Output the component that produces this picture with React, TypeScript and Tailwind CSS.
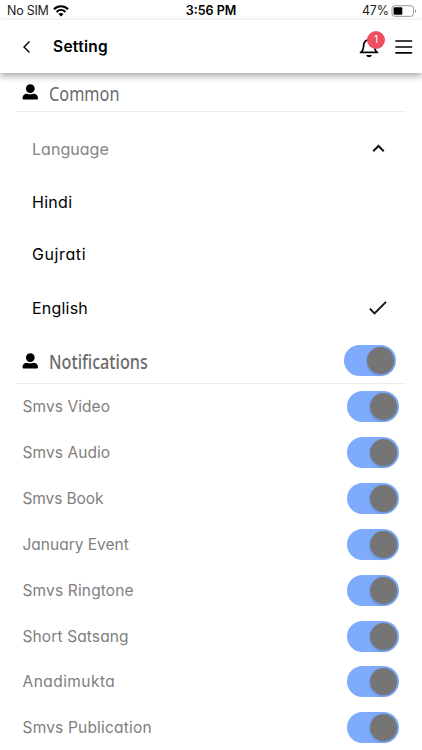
import type { ReactNode } from "react";

const items = [
  { label: "Smvs Video", tracking: "tracking-[0.07px]" },
  { label: "Smvs Audio", tracking: "tracking-[0.07px]" },
  { label: "Smvs Book", tracking: "tracking-[-0.1px]" },
  { label: "January Event", tracking: "tracking-[0px]" },
  { label: "Smvs Ringtone", tracking: "tracking-[0.15px]" },
  { label: "Short Satsang", tracking: "tracking-[0.12px]" },
  { label: "Anadimukta", tracking: "tracking-[0.45px]" },
  { label: "Smvs Publication", tracking: "tracking-[0.19px]" },
];

function Toggle() {
  return (
    <div className="flex h-[31px] w-[52px] shrink-0 items-center justify-end rounded-full bg-[#7eabfc] pr-[2px]">
      <div className="size-[27px] rounded-full bg-[#757575] shadow-[0_1px_3px_rgba(0,0,0,0.2)]" />
    </div>
  );
}

function Person({ className }: { className: string }) {
  return (
    <svg width="16" height="16" viewBox="0 0 16 16" className={`shrink-0 ${className}`}>
      <circle cx="8.300" cy="4.600" r="4.400" />
      <path d="M.5 14.200C.5 11.300 2.400 9.800 5 9.700c1.800.8 4.800.8 6.600 0 2.600.1 4.400 1.600 4.400 4.500 0 .8-.5 1.300-1.300 1.300H1.800c-.8 0-1.300-.5-1.300-1.300Z" />
    </svg>
  );
}

function SectionTitle({ children, className }: { children: ReactNode; className: string }) {
  return (
    <h2 className={`origin-left whitespace-nowrap font-['Noto_Sans',sans-serif] text-[19.5px] leading-6 text-[#6b6b6b] ${className}`}>
      {children}
    </h2>
  );
}

export default function App() {
  return (
    <div className="flex h-[750px] w-full flex-col overflow-hidden bg-white font-['Inter',sans-serif] text-black [font-feature-settings:'cv11']">
      <div className="grid h-5 shrink-0 grid-cols-3 items-center pt-[2px] pr-[5px] pl-[7px] text-[12.5px] leading-4 [font-feature-settings:normal]">
        <div className="flex items-center gap-[4px] text-[#222]">
          <span className="tracking-[-0.25px]">No SIM</span>
          <svg width="16" height="12" viewBox="0 0 16 12" fill="none" stroke="#000" strokeWidth="2.1">
            <path d="M1 4.300C5 .3 11 .3 15 4.300M3.500 6.900c2.600-2.500 6.400-2.500 9 0" />
            <path d="M8 11.500 5.500 9c1.400-1.300 3.600-1.300 5 0Z" fill="#000" stroke="none" />
          </svg>
        </div>
        <span className="-ml-[2px] text-center font-semibold">3:56 PM</span>
        <div className="flex items-center justify-end gap-[2px] text-[#222]">
          <span className="tracking-[-0.1px]">47%</span>
          <svg width="26" height="12" viewBox="0 0 26 12">
            <rect x="1" y=".7" width="21.500" height="10.600" rx="2.700" fill="none" stroke="#999" />
            <rect x="2.600" y="2.300" width="8.700" height="7.400" rx="1" />
            <path d="M24 4v4c1.500-.7 1.500-3.300 0-4Z" fill="#999" />
          </svg>
        </div>
      </div>

      <header className="z-10 flex h-[53px] shrink-0 items-center bg-white pr-[9px] pl-[22px] shadow-[0_3px_7px_rgba(0,0,0,0.35)]">
        <svg width="10" height="14" viewBox="0 0 10 14" fill="none" stroke="#000" strokeWidth="1.400">
          <path d="M7.500 1.400 2 7l5.500 5.600" />
        </svg>
        <h1 className="ml-[21px] text-[15.5px] leading-6 font-semibold tracking-[0.3px]">Setting</h1>
        <div className="relative ml-auto h-7 w-7">
          <svg width="22" height="22" viewBox="0 0 22 22" fill="none" className="mt-[4px]">
            <path d="M1.500 15.400h17M2.500 15c2-2 1.900-3 2.100-6.200C4.800 5.500 6.500 2.800 10 2.800s5.200 2.700 5.400 6c.2 3.200.1 4.200 2.100 6.200" stroke="#000" strokeWidth="1.700" strokeLinecap="round" />
            <path d="M7.300 18h5.400c-.3 3-5.100 3-5.400 0Z" fill="#000" />
          </svg>
          <span className="absolute top-[-2px] left-[8px] flex size-[18px] items-center justify-center rounded-full bg-[#ef4e60] text-[10px] text-white">
            1
          </span>
        </div>
        <svg width="18" height="16" viewBox="0 0 18 16" className="ml-[8px]" stroke="#000" strokeWidth="1.700" strokeLinecap="round">
          <path d="M1 2h15.500M1 8h15.500M1 13.800h15.500" />
        </svg>
      </header>

      <section className="shrink-0">
        <div className="mx-4 flex h-[39px] items-center gap-[11px] border-b border-[#ebebeb] pt-[3px] pl-[6px]">
          <Person className="mb-[3px]" />
          <SectionTitle className="scale-x-[0.835]">Common</SectionTitle>
        </div>
        <div className="px-8 text-[16px] leading-6">
          <div className="flex h-[73px] items-center justify-between pr-[5px] text-[#858585]">
            <span className="tracking-[0.03px]">Language</span>
            <svg width="13" height="10" viewBox="0 0 13 10" fill="none" stroke="#111" strokeWidth="2">
              <path d="m1.200 7.300 5.300-5.300 5.300 5.300" />
            </svg>
          </div>
          <div className="flex h-[34px] items-center tracking-[0.3px]">Hindi</div>
          <div className="flex h-[70px] items-center tracking-[0.6px]">Gujrati</div>
          <div className="flex h-[38px] items-center justify-between pr-[3px]">
            <span className="tracking-[0.2px]">English</span>
            <svg width="18" height="14" viewBox="0 0 18 14" fill="none" stroke="#111" strokeWidth="1.900">
              <path d="m.8 7.700 4.700 4.700L17 .9" />
            </svg>
          </div>
        </div>
      </section>

      <section className="shrink-0">
        <div className="mx-4 flex h-[57px] items-center gap-[11px] border-b border-[#ebebeb] pt-[11px] pr-[10px] pl-[6px]">
          <Person className="mt-px" />
          <SectionTitle className="scale-x-[0.83] pt-[2px] font-medium">Notifications</SectionTitle>
          <div className="ml-auto">
            <Toggle />
          </div>
        </div>
        <ul className="pr-[23px] pl-[22.5px]">
          {items.map(({ label, tracking }) => (
            <li key={label} className="flex h-[45.830px] items-center justify-between text-[15.5px] leading-6 text-[#808080]">
              <span className={`pt-px ${tracking}`}>{label}</span>
              <Toggle />
            </li>
          ))}
        </ul>
      </section>
    </div>
  );
}
